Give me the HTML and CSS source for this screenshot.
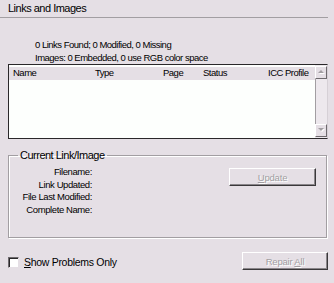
FILE: index.html
```html
<!DOCTYPE html>
<html>
<head>
<meta charset="utf-8">
<link rel="stylesheet" href="styles.css">
</head>
<body>
<div class="dialog">
  <div class="title">Links and Images</div>
  <div class="summary">
    <div>0 Links Found; 0 Modified, 0 Missing</div>
    <div>Images: 0 Embedded, 0 use RGB color space</div>
  </div>
  <div class="list">
    <div class="list-main">
      <div class="list-head">
        <span>Name</span><span>Type</span><span>Page</span><span>Status</span><span>ICC Profile</span>
      </div>
      <div class="list-body"></div>
    </div>
    <div class="scrollbar">
      <div class="sb-btn"><svg width="7" height="5" viewBox="0 0 7 5"><path d="M1 4 L4 1 L7 4 Z" fill="#fff"/><path d="M0 3 L3 0 L6 3 Z" fill="#a29ea2"/></svg></div>
      <div class="sb-track"></div>
      <div class="sb-btn"><svg width="7" height="5" viewBox="0 0 7 5"><path d="M1 1 L7 1 L4 4 Z" fill="#fff"/><path d="M0 0 L6 0 L3 3 Z" fill="#a29ea2"/></svg></div>
    </div>
  </div>
  <fieldset class="group">
    <legend>Current Link/Image</legend>
    <div class="group-body">
      <div class="labels">
        <div class="lbl"><span>Filename:</span></div>
        <div class="lbl"><span>Link Updated:</span></div>
        <div class="lbl"><span>File Last Modified:</span></div>
        <div class="lbl"><span>Complete Name:</span></div>
      </div>
      <button class="btn update" disabled><u>U</u>pdate</button>
    </div>
  </fieldset>
  <div class="footer">
    <label class="check"><span class="box"></span><span><u>S</u>how Problems Only</span></label>
    <button class="btn repair" disabled>Repair <u>A</u>ll</button>
  </div>
</div>
</body>
</html>
```
FILE: styles.css
```css
html, body {
  margin: 0;
  padding: 0;
  background: #e5dfe5;
}
body {
  font-family: "Liberation Sans", Arial, sans-serif;
  font-size: 9.5px;
  color: #000;
  width: 334px;
  height: 283px;
  overflow: hidden;
}
.title {
  height: 17px;
  line-height: 17px;
  font-size: 11px;
  padding-left: 8px;
  margin-right: 6px;
  border-bottom: 1px solid #a29ea2;
  letter-spacing: -0.5px;
}
.summary {
  margin: 21px 0 0 35px;
  line-height: 12.5px;
  letter-spacing: -0.5px;
}
.list {
  display: flex;
  height: 75px;
  margin: 0 6px 0 8px;
  box-sizing: border-box;
  border: 1px solid #2a282a;
  border-right-color: #d6d0d6;
  background: #fdfffd;
}
.list-main {
  flex: 1;
  display: flex;
  flex-direction: column;
}
.list-head {
  display: grid;
  grid-template-columns: 82px 68px 40px 65px 1fr;
  line-height: 12px;
  margin-top: 1px;
  background: #e5dfe5;
  border-top: 1px solid #fff;
  box-sizing: border-box;
  height: 14px;
  letter-spacing: -0.5px;
}
.list-head span {
  padding-left: 4px;
  white-space: nowrap;
  overflow: hidden;
}
.list-body {
  flex: 1;
  background: #fdfffd;
}
.scrollbar {
  width: 12px;
  display: flex;
  flex-direction: column;
  background: #ede8ed;
  padding-top: 1px;
  padding-bottom: 1px;
}
.sb-btn {
  height: 13px;
  box-sizing: border-box;
  background: #e5dfe5;
  border: 1px solid;
  border-color: #fff #6e6a6e #6e6a6e #fff;
  display: flex;
  align-items: center;
  justify-content: center;
}
.sb-track {
  flex: 1;
  border-left: 1px solid #a29ea2;
}
.group {
  margin: 10px 7px 0 8px;
  padding: 0 10px 0 9px;
  border: 1px solid #a29ea2;
  box-shadow: 1px 1px 0 #fff, inset 1px 1px 0 #fff;
  height: 89px;
  box-sizing: border-box;
  min-width: 0;
}
.group legend {
  padding: 0 2px;
  font-size: 11px;
  line-height: 12px;
  letter-spacing: -0.5px;
}
.group-body {
  display: flex;
  align-items: flex-start;
}
.labels {
  width: 74px;
  padding-top: 5px;
  letter-spacing: -0.4px;
}
.lbl {
  display: flex;
  justify-content: flex-end;
  line-height: 12.5px;
  white-space: nowrap;
}
.btn {
  font-family: "Liberation Sans", Arial, sans-serif;
  font-size: 9.5px;
  background: #e5dfe5;
  border: 1px solid;
  border-color: #fff #3a383a #3a383a #fff;
  box-shadow: inset -1px -1px 0 #8a868a;
  color: #a29ea2;
  text-shadow: 1px 1px 0 #fff;
  height: 18px;
  padding: 0;
  box-sizing: border-box;
  letter-spacing: -0.2px;
}
.update {
  margin-left: auto;
  margin-top: 7px;
  width: 87px;
}
.footer {
  display: flex;
  align-items: center;
  justify-content: space-between;
  margin: 14px 6px 0 8px;
  height: 18px;
}
.check {
  display: flex;
  align-items: center;
  gap: 5px;
  margin-top: 2px;
  font-size: 10.5px;
  letter-spacing: -0.3px;
}
.box {
  width: 11px;
  height: 11px;
  box-sizing: border-box;
  background: #fff;
  border: 1px solid;
  border-color: #6e6a6e #e5dfe5 #e5dfe5 #6e6a6e;
  box-shadow: inset 1px 1px 0 #2a282a;
}
.repair {
  width: 86px;
}
```
